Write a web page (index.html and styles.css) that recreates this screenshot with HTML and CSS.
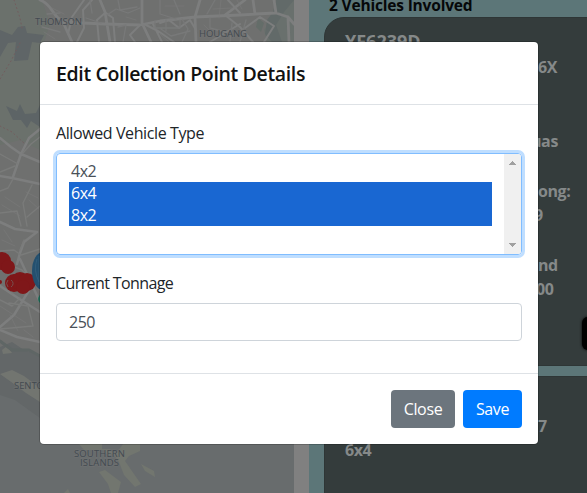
FILE: index.html
```html
<!DOCTYPE html>
<html lang="en">
<head>
<meta charset="utf-8">
<title>Edit Collection Point Details</title>
<link rel="stylesheet" href="styles.css">
</head>
<body>
<div class="page">
  <svg class="map" viewBox="0 0 294 493" width="294" height="493">
    <rect width="294" height="493" fill="#6f706f"/>
    <path d="M0 0H42L50 24 44 42 40 150 20 140 0 145Z" fill="#6b716c"/>
    <path d="M0 30 12 35 18 27 25 26 27 33 44 35 40 43 32 42 28 60 14 61 16 42 8 43 0 57Z" fill="#5f6567"/>
    <path d="M6 106 17 111 20 104 25 114 36 113 40 105V127L31 121 27 128 21 120 13 120Z" fill="#5d6466"/>
    <path d="M276 0H294V42H267L264 30 279 12Z" fill="#69706d"/>
    <path d="M276 0 273 12 267 20 265 34 272 42H282L276 25 284 12 294 0Z" fill="#626a69"/>
    <path d="M258 18 264 23 261 32 256 27Z" fill="#646d69"/>
    <path d="M0 347 12 342 24 350 40 355V493H0Z" fill="#636768"/>
    <path d="M0 374 12 370 24 376 40 388V402L26 393 14 384Z" fill="#727570"/>
    <path d="M2 350 7 346 12 353 3 354Z" fill="#727570"/>
    <path d="M0 395 15 400 40 418V430H294V493H0Z" fill="#686c6d"/>
    <path d="M79 444 84 450H104L108 456 118 451 123 444H140V451L129 456 125 461 134 474 141 484 135 487 124 475 119 462 110 449H102V444ZM99 472 105 470 121 482 118 493H111L108 484ZM141 464 154 471 155 477 145 471ZM64 493 68 489 70 493Z" fill="#72766f"/>
    <g fill="none" stroke="#7d7e7e" stroke-linecap="round" stroke-linejoin="round">
      <path stroke-width="2.8" d="M40 0C54 5 52 19 66 22L83 23 105 24 140 25 160 21 195 17 240 15 276 13 288 17 294 24M142 0V23L151 42M100 0 105 12 110 42M200 0 195 17 196 42M245 0 225 15M253 0 255 14 276 13 274 0M288 17 289 42M62 20 72 42"/>
      <path stroke-width="2" d="M84 0 72 17 68 34M92 0 83 10 84 28 77 42M105 13 97 20 99 42M106 13 113 18 115 42M140 25 130 35 135 42M153 24 162 42M144 24 158 31 174 42M160 23 169 20 179 28 190 20 196 30M225 15 240 27 253 42M245 28 260 17 274 26 264 42M228 0 240 13M210 42 240 24"/>
      <path stroke-width="1.3" stroke="#787979" d="M118 0 120 10 137 7M107 15 116 9 128 13 140 8M155 21V28H180V20M161 29 171 36 190 31M210 18V28L225 32M166 20V31M215 0 207 14M232 23 230 42M246 20 240 42M182 19 188 29 182 42M160 0V14L176 19M174 0 180 14M47 14 60 13M42 27 60 32M86 18 101 23M90 0 92 13M118 27 126 25 123 42"/>
      <path stroke-width="2.5" d="M0 138 11 147 21 154 40 162M40 129 29 138 21 154 13 177M0 176 12 178 40 184M0 222 15 229 37 232M37 232 24 242 20 253 17 264M0 286 18 298 40 312M40 273 28 292 14 315 0 327M0 330 17 337 40 342M20 259 40 302"/>
      <path stroke-width="1.4" stroke="#7a7b7a" d="M40 137 31 144 23 153M13 179 8 188 0 191M32 185 23 203 27 226M0 154 18 164M15 166 0 172M0 213 17 211 21 226M40 206 27 217M0 251 14 250 21 255 40 249M4 263 22 270 40 290M0 300 12 306 20 298M9 303 28 306 33 326 0 329M9 278 12 294M20 250 24 240M30 273 17 280"/>
      <path stroke-width=".6" stroke="#7a7b7a" d="M2 205 20 216M5 197 20 207M29 200 39 209M26 192 38 198M2 240 15 246M4 230 12 242M44 32 55 39M52 8 64 14M126 17 136 20M160 34 169 42M204 25 217 38M221 0 219 18M213 9 232 8M237 0 242 9M165 6 184 6M0 306 26 323M10 315 18 331M24 330 33 337"/>
      <path stroke="#725d5e" stroke-width="1" stroke-dasharray="1 3" d="M14 0 20 18 22 28M20 43 11 61 0 79M0 126 12 132 25 144"/>
      <path stroke="#5f6665" stroke-width="3" d="M0 341 12 350 29 350 40 356"/>
    </g>
    <g fill="#7f1719">
      <circle cx="2" cy="261" r="9"/><circle cx="8" cy="267" r="7"/><circle cx="0" cy="282" r="2"/>
      <circle cx="14" cy="283" r="9"/><circle cx="20" cy="281" r="9"/><circle cx="27" cy="282" r="9"/><circle cx="23" cy="287" r="7"/>
    </g>
    <path d="M11 280a4 4 0 0 1 0 7M8 280q-3 3 0 7" fill="none" stroke="#77504f"/>
    <ellipse cx="43" cy="271" rx="11" ry="19" fill="#24506f"/>
    <path d="M37 259q-4 11 2 23M39 256v29" stroke="#3b6482" stroke-width=".6" fill="none"/>
    <circle cx="43" cy="299" r="5" fill="#23735e"/>
    <g class="place">
      <text x="35" y="24.5" textLength="47">THOMSON</text>
      <text x="199" y="37" textLength="48">HOUGANG</text>
      <text x="14" y="388.5" textLength="41">SENTOSA</text>
      <text x="74" y="457" textLength="51">SOUTHERN</text>
      <text x="80" y="466" textLength="39">ISLANDS</text>
    </g>
  </svg>
  <aside class="panel">
    <h2 class="count"><span>2 Vehicles Involved</span></h2>
    <section class="card first">
      <h3>YF6239D</h3>
      <ul class="facts">
        <li>6X</li><li class="area">uas</li><li class="street">ong:</li><li class="number">9</li><li class="zone">nd</li><li class="amount">00</li>
      </ul>
      <span class="action"></span>
    </section>
    <section class="card second"><p class="end">7</p><p class="axle">6x4</p></section>
  </aside>
</div>
<div class="modal" role="dialog">
  <header><h1><span>Edit Collection Point Details</span></h1></header>
  <div class="body">
    <div class="label"><span class="allowed">Allowed Vehicle Type</span></div>
    <div class="listbox">
      <div class="options"><div>4x2</div><div class="on">6x4</div><div class="on">8x2</div></div>
      <div class="scroll">
        <svg width="7" height="4" shape-rendering="crispEdges"><path d="M0 4 3.5 0 7 4Z"/></svg>
        <svg width="7" height="4" shape-rendering="crispEdges"><path d="M0 0 3.5 4 7 0Z"/></svg>
      </div>
    </div>
    <div class="label"><span class="current">Current Tonnage</span></div>
    <div class="input">250</div>
  </div>
  <footer><button class="close">Close</button><button class="save">Save</button></footer>
</div>
</body>
</html>
```

FILE: styles.css
```css
* { box-sizing: border-box; }
body { margin: 0; width: 587px; height: 493px; overflow: hidden; background: #808080; font: 16px/24px "Open Sans", "Noto Sans", sans-serif; color: #212529; }
h1, h2, h3, p, ul { margin: 0; padding: 0; list-style: none; }
.page { display: flex; height: 493px; overflow: hidden; }
.map { flex: none; margin-right: 15px; }
.place { font: 500 9.5px "Open Sans", sans-serif; fill: #434a50; stroke: #777; stroke-width: 1.5px; stroke-opacity: .4; paint-order: stroke; }
.panel { flex: none; width: 278px; padding-left: 15px; background: #5c7678; }
.count { height: 17px; padding-left: 5px; font-size: 15.5px; line-height: 11px; font-weight: 700; color: #060809; letter-spacing: -.18px; white-space: nowrap; }
.card { width: 300px; background: #343c3c; border: 1px solid #2e3636; color: #858989; font-weight: 700; }
.first { position: relative; height: 349px; border-radius: 20px 20px 0 0; padding: 11px 0 0 20px; }
.first h3 { font-size: 18px; line-height: 24px; letter-spacing: 0; }
.facts { padding: 2px 0 0 193px; line-height: 24px; font-size: 16px; font-weight: 700; letter-spacing: -.4px; display: flex; flex-direction: column; }
.facts li { height: 24px; }
.area { margin-top: 50px; width: 30px; text-indent: -7px; }
.street { margin-top: 26px; }
.number { text-indent: -4px; }
.zone { margin-top: 26px; }
.amount { text-indent: -2px; }
.action { position: absolute; left: 257px; top: 299px; width: 40px; height: 33px; border-radius: 6px; background: #000; box-shadow: 0 0 3px #000; }
.second { height: 130px; margin-top: 10px; padding: 37px 0 0 20px; letter-spacing: -.4px; }
.end { padding-left: 193px; }
.modal { position: absolute; left: 40px; top: 42px; width: 498px; height: 402px; display: flex; flex-direction: column; background: #fff; border-radius: 4px; box-shadow: 0 0 0 1px rgba(0,0,0,.2); }
header { height: 63px; padding: 16px 16px 0; border-bottom: 1px solid #dee2e6; }
h1 { font-size: 19.5px; line-height: 32px; font-weight: 600; color: #111; white-space: nowrap; letter-spacing: -.35px; }
.body { padding: 16px; height: 268px; }
.label { height: 24px; margin-bottom: 8px; white-space: nowrap; }
.allowed { letter-spacing: -.4px; }
.current { letter-spacing: -.6px; }
.listbox { display: flex; height: 102px; margin-bottom: 16px; border: 1px solid #80bdff; border-radius: 4px; box-shadow: 0 0 0 3px #bfdeff; overflow: hidden; }
.options { flex: 1; padding: 6px 12px; color: #495057; line-height: 22px; letter-spacing: -.5px; }
.options div { height: 22px; padding-left: 2px; }
.options .on { background: #1967d2; color: #fff; }
.scroll { width: 17px; padding: 7px 0; background: #f0f0f0; display: flex; flex-direction: column; align-items: center; justify-content: space-between; }
.scroll path { fill: #a0a0a0; }
.input { height: 38px; padding: 6px 12px; border: 1px solid #ced4da; border-radius: 4px; color: #495057; letter-spacing: -.5px; }
footer { flex: 1; display: flex; justify-content: flex-end; gap: 8px; padding: 16px 16px 0; border-top: 1px solid #dee2e6; }
button { height: 38px; padding: 0; border: 0; border-radius: 4px; color: #fff; font: 16px/24px "Open Sans", sans-serif; letter-spacing: -.35px; }
.close { width: 64px; background: #6c757d; }
.save { width: 59px; background: #007bff; }
```
